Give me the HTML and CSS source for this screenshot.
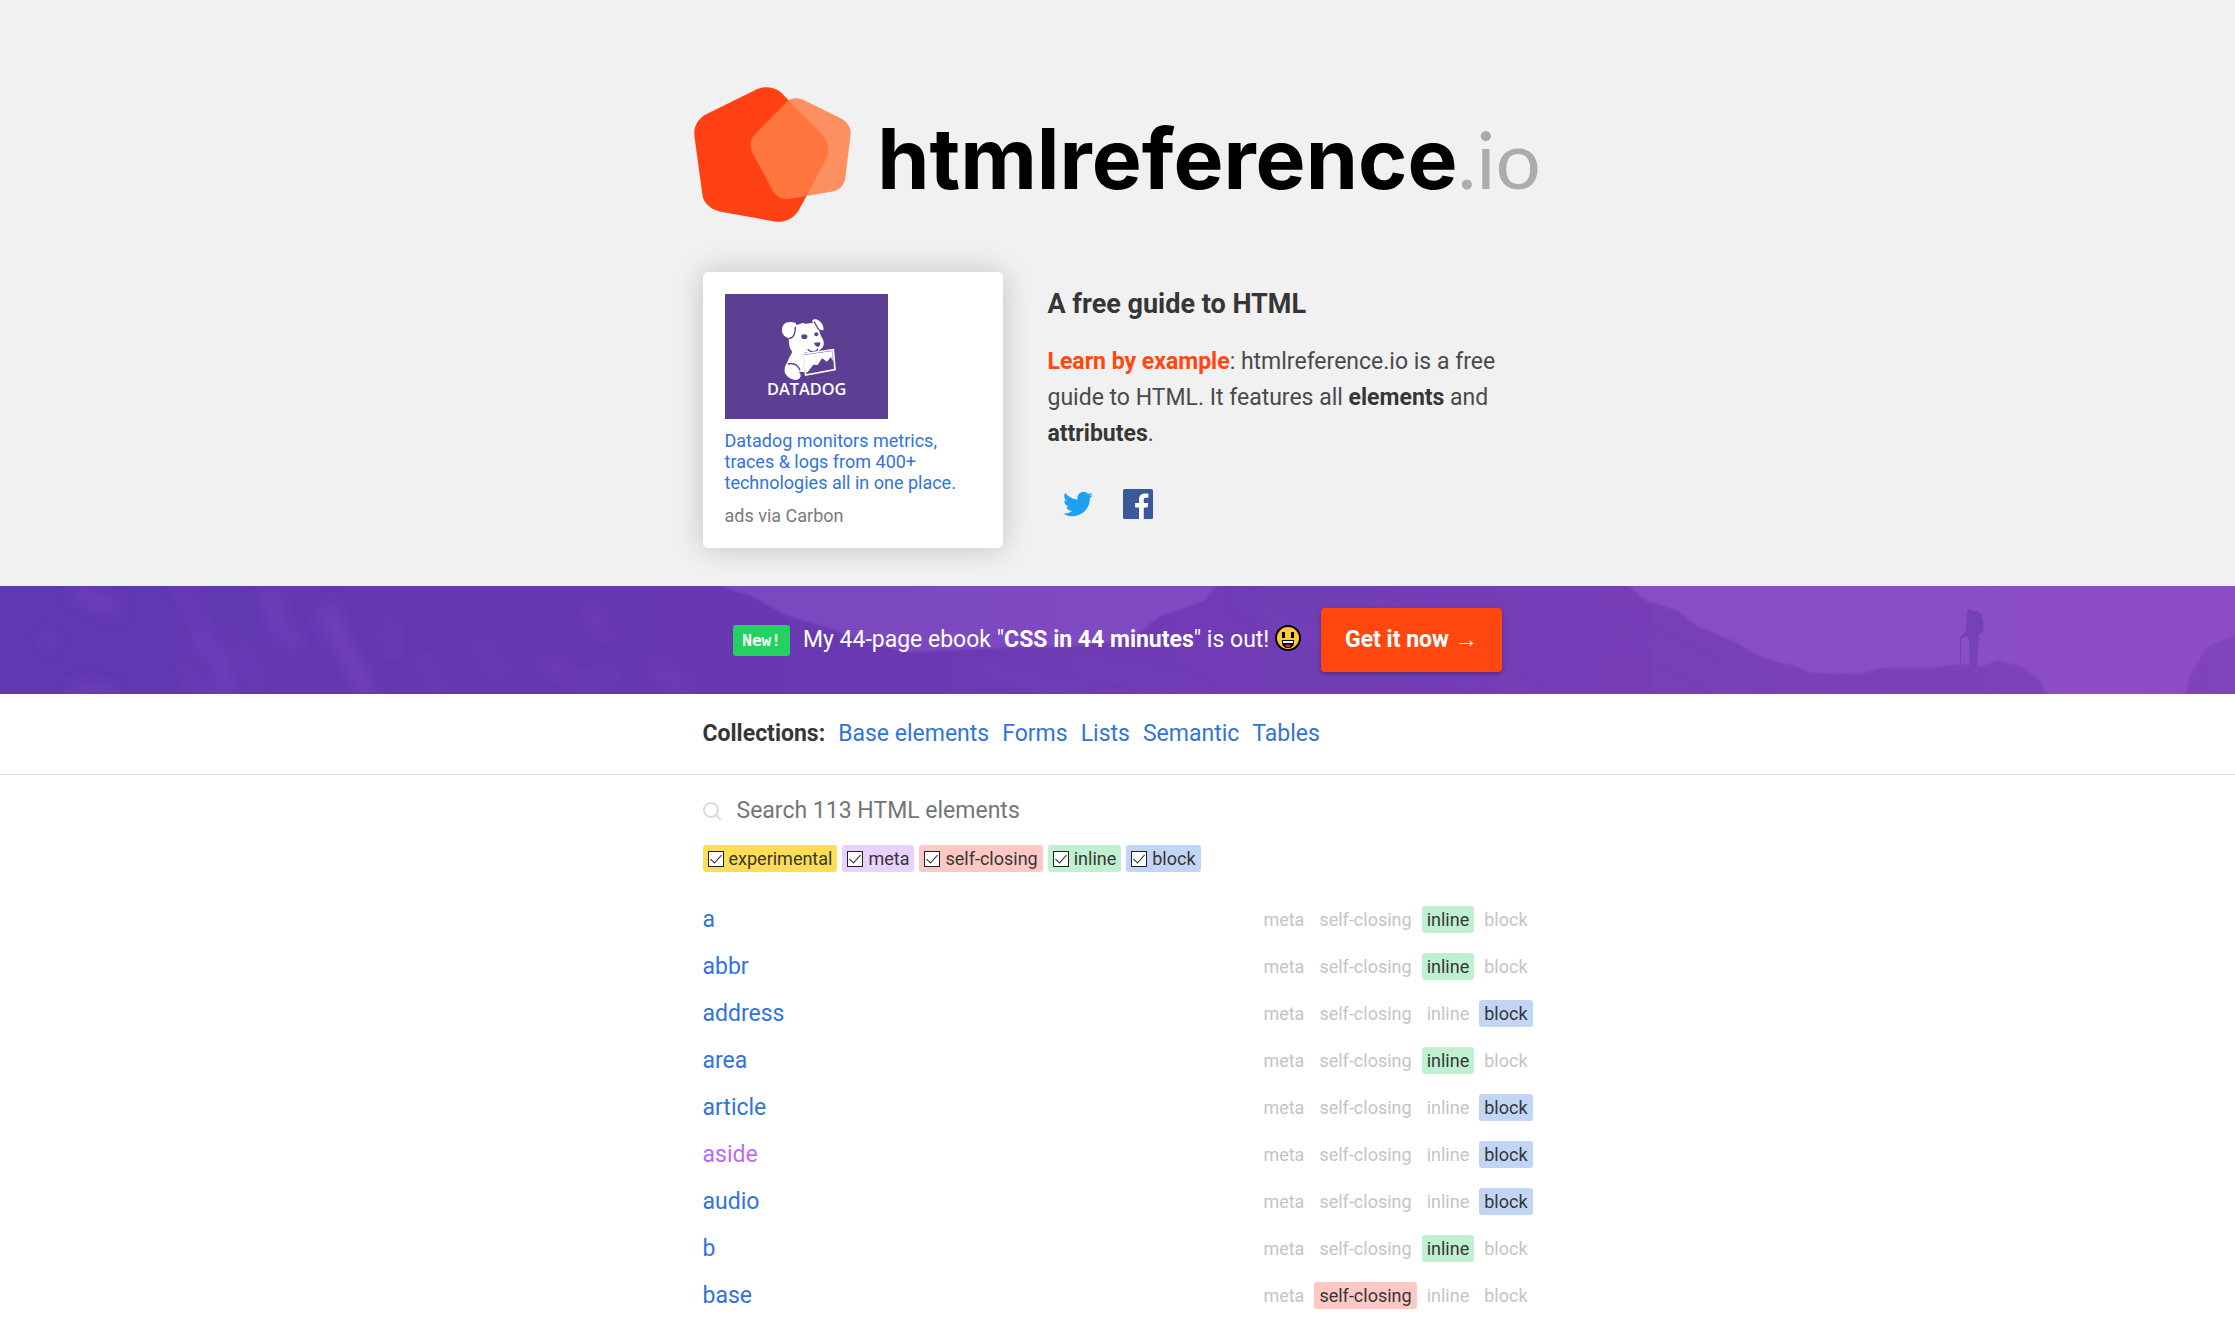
FILE: index.html
```html
<!DOCTYPE html>
<html lang="en">
<head>
<meta charset="utf-8">
<meta name="viewport" content="width=device-width, initial-scale=1">
<title>HTML Reference - A free guide to all HTML elements and attributes.</title>
<link rel="stylesheet" href="styles.css">
</head>
<body>
<header class="hero">
  <h1 class="logo">
    <svg class="logo-mark" viewBox="48 50 470 404" aria-hidden="true">
      <path fill="#ff4113" d="M236 57C265 44 298 51 318 76L432 193C452 216 454 242 443 268L362 418C346 444 320 456 294 453L124 423C95 415 76 396 73 372L49 195C47 170 58 148 80 134Z"/>
      <path fill="#ff7f46" opacity=".85" d="M328 92C342 81 362 82 376 89L490 145C508 155 518 172 517 190L501 322C497 345 484 358 462 363L328 386C306 387 292 374 285 362L222 246C213 227 216 206 228 194Z"/>
    </svg>
    <span class="logo-text">htmlreference<span class="logo-tld">.io</span></span>
  </h1>
  <div class="container intro">
    <aside class="ad">
      <a class="ad-link" href="#">
        <svg class="ad-image" viewBox="135 120 489 375" role="img" aria-label="Datadog">
          <path fill="#5c3f92" d="M135 120h489v375H135z"/>
          <path fill="#fff" d="M306 232C304 210 320 201 338 205C346 205 349 210 350 213L368 207C380 212 392 206 400 207C392 198 402 193 412 197C424 202 431 214 431 227C424 231 417 226 413 219C419 232 421 244 427 253C434 265 433 278 424 284C412 298 390 302 377 295L367 300L373 354L356 353C369 366 359 377 346 378C326 375 311 361 314 345C315 332 323 326 327 312L337 294C328 283 326 269 326 253C314 249 307 242 306 232Z"/>
          <path fill="none" stroke="#5c3f92" stroke-width="4" d="M326 253C340 253 346 243 346 218M402 203C408 210 410 219 416 227M323 330C342 325 354 335 360 349M383 286C395 298 410 294 414 284"/>
          <g fill="#5c3f92"><ellipse cx="373" cy="248" rx="9" ry="7"/><circle cx="409" cy="241" r="6"/><path d="M402 266L421 265Q422 273 415 279Q404 276 402 266Z"/></g>
          <path fill="#5c3f92" stroke="#fff" stroke-width="5" d="M368 300L460 287L465 347L377 363Z"/>
          <path fill="#fff" d="M371 303L458 291L458 321L453 309L441 323L426 313L413 333L400 332L383 354L376 357Z"/>
          <text class="ad-brand" x="380" y="424">DATADOG</text>
        </svg>
        <span class="ad-copy">Datadog monitors metrics, traces &amp; logs from 400+ technologies all in one place.</span>
      </a>
      <a class="ad-via" href="#">ads via Carbon</a>
    </aside>
    <div class="about">
      <h2 class="title">A free guide to HTML</h2>
      <p class="lead"><strong class="accent">Learn by example</strong>: htmlreference.io is a free guide to HTML. It features all <strong>elements</strong> and <strong>attributes</strong>.</p>
      <nav class="social" aria-label="Share">
        <a href="#" aria-label="Twitter"><svg viewBox="0 0 24 24"><path fill="#1da1f2" d="M24 4.6a10 10 0 0 1-2.8.8 5 5 0 0 0 2.1-2.7c-1 .6-2 1-3.1 1.2a4.9 4.9 0 0 0-8.4 4.5C7.7 8.200 4.100 6.300 1.700 3.200a4.900 4.900 0 0 0 1.500 6.600 4.900 4.900 0 0 1-2.200-.6v.06a4.900 4.900 0 0 0 3.900 4.800 5 5 0 0 1-2.200.1 4.900 4.900 0 0 0 4.600 3.400A9.900 9.900 0 0 1 0 19.500a14 14 0 0 0 7.500 2.200c9.100 0 14-7.500 14-14v-.6A10 10 0 0 0 24 4.600z"/></svg></a>
        <a href="#" aria-label="Facebook"><svg viewBox="0 0 24 24"><rect width="24" height="24" rx="1.300" fill="#3b5998"/><path fill="#fff" d="M12.800 24v-9.300H9.700v-3.600h3.100V8.400c0-3.100 1.900-4.800 4.700-4.800 1.300 0 2.500.1 2.800.15v3.200h-1.900c-1.500 0-1.800.7-1.800 1.800v2.350h3.600l-.5 3.600h-3.100V24z"/></svg></a>
      </nav>
    </div>
  </div>
</header>

<section class="promo">
  <svg class="promo-art" viewBox="0 0 2235 108" preserveAspectRatio="none" aria-hidden="true">
    <defs>
      <linearGradient id="sky" x1="700" x2="2235" y1="0" y2="0" gradientUnits="userSpaceOnUse"><stop stop-color="#7947bf"/><stop offset=".6" stop-color="#874dc5"/><stop offset="1" stop-color="#8e4dc6"/></linearGradient>
      <linearGradient id="rock" x1="0" x2="2235" y1="0" y2="0" gradientUnits="userSpaceOnUse"><stop stop-color="#6038b1"/><stop offset=".3" stop-color="#6738b1"/><stop offset=".65" stop-color="#733db6"/><stop offset="1" stop-color="#8144bb"/></linearGradient>
      <filter id="soft" x="-20%" y="-20%" width="140%" height="140%"><feGaussianBlur stdDeviation="7"/></filter>
      <filter id="edge"><feGaussianBlur stdDeviation="1"/></filter>
    </defs>
    <path fill="url(#sky)" d="M0 0h2235v108H0z"/>
    <path fill="url(#rock)" filter="url(#edge)" d="M-9-9H715L725 2 752 10 770 20 782 28 828 42 860 54 893 63 910 66 1000 62 1080 60 1128 54 1145 42 1160 30 1185 22 1205 14 1225-9H1618L1645 14 1678 25 1697 40 1735 56 1750 65 1772 75 1795 80 1812 87 1860 88 1880 82 1930 82 1958 78 1982 80 1998 74 2022 81 2040 94 2053 120H-9zM2182 120L2190 90 2203 66 2212 58 2250 44V120z"/>
    <path fill="#7541b8" d="M1967 25q3-4 6 0 8-2 10 8 2 10-1 14h-3l-2 34h-7l-1-28-3-3-5 3v27h-1V51l6-6z"/>
    <g fill="none" stroke="#7c47c2" stroke-linecap="round" filter="url(#soft)">
      <path stroke-width="18" opacity=".4" d="M80 8L115 22M270 10L280 42 292 55M325 30L350 75 370 112M225 108L220 70 200 55M75 105L110 108"/>
      <path stroke-width="9" opacity=".4" d="M180 0L205 48M332 15L345 60 365 95M47 45L50 60M185 80L200 108M390 38L392 65M545 78L568 88M655 82L685 102M425 76L440 104M592 25L604 48M245 62L255 98"/>
      <path stroke-width="12" opacity=".22" d="M480 60L500 85M610 90L580 98M980 82L1080 105M1080 76L1200 105M1240 15L1360 70M1380 20L1470 94M1500 98L1530 110M1620 40L1740 105"/>
    </g>
  </svg>
  <div class="promo-content">
    <span class="new">New!</span>
    <p class="promo-text">My 44-page ebook "<strong>CSS in 44 minutes</strong>" is out!
      <svg class="smile" viewBox="0 0 26 26" role="img" aria-label="grinning face"><circle cx="13" cy="13" r="12" fill="#ffc83d" stroke="#000" stroke-width="2"/><path d="M7 7h3v6H7zM16 7h3v6h-3z"/><path d="M7 15h12v2q0 6-6 6t-6-6z"/><path fill="#fff" d="M8 16h10v2H8z"/><path fill="#f03a17" d="M10 20.500q3-2 6 0-3 3-6 0"/></svg>
    </p>
    <button class="cta" type="button">Get it now →</button>
  </div>
</section>

<nav class="collections" aria-label="Collections">
  <div class="container collections-list">
    <strong>Collections:</strong>
    <a href="#">Base elements</a>
    <a href="#">Forms</a>
    <a href="#">Lists</a>
    <a href="#">Semantic</a>
    <a href="#">Tables</a>
  </div>
</nav>

<main class="container">
  <div class="search">
    <label for="search" aria-label="Search"><svg class="search-icon" viewBox="0 0 19 19"><circle cx="8" cy="8" r="7"/><path d="M13 13l5 5"/></svg></label>
    <input id="search" class="search-input" type="text" placeholder="Search 113 HTML elements">
  </div>
  <div class="filters">
    <label class="filter experimental"><input type="checkbox" checked>experimental</label>
    <label class="filter meta"><input type="checkbox" checked>meta</label>
    <label class="filter self-closing"><input type="checkbox" checked>self-closing</label>
    <label class="filter inline"><input type="checkbox" checked>inline</label>
    <label class="filter block"><input type="checkbox" checked>block</label>
  </div>
  <ul class="elements">
    <li><a href="#">a</a><span class="tags"><span>meta</span><span>self-closing</span><span class="inline">inline</span><span>block</span></span></li>
    <li><a href="#">abbr</a><span class="tags"><span>meta</span><span>self-closing</span><span class="inline">inline</span><span>block</span></span></li>
    <li><a href="#">address</a><span class="tags"><span>meta</span><span>self-closing</span><span>inline</span><span class="block">block</span></span></li>
    <li><a href="#">area</a><span class="tags"><span>meta</span><span>self-closing</span><span class="inline">inline</span><span>block</span></span></li>
    <li><a href="#">article</a><span class="tags"><span>meta</span><span>self-closing</span><span>inline</span><span class="block">block</span></span></li>
    <li><a class="seen" href="#">aside</a><span class="tags"><span>meta</span><span>self-closing</span><span>inline</span><span class="block">block</span></span></li>
    <li><a href="#">audio</a><span class="tags"><span>meta</span><span>self-closing</span><span>inline</span><span class="block">block</span></span></li>
    <li><a href="#">b</a><span class="tags"><span>meta</span><span>self-closing</span><span class="inline">inline</span><span>block</span></span></li>
    <li><a href="#">base</a><span class="tags"><span>meta</span><span class="self-closing">self-closing</span><span>inline</span><span>block</span></span></li>
  </ul>
</main>
</body>
</html>
```
FILE: styles.css
```css
* {
  box-sizing: border-box;
  margin: 0;
  padding: 0;
}

body {
  background: #fff;
  color: #4a4a4a;
  font-family: Roboto, "Liberation Sans", sans-serif;
  font-size: 23px;
  line-height: 36px;
}

a {
  color: #3273dc;
  text-decoration: none;
}

strong {
  color: #363636;
  font-weight: 700;
}

svg {
  display: block;
}

.container {
  width: 100%;
  max-width: 830px;
  margin: 0 auto;
}

/* Hero */
.hero {
  background: #f1f1f1;
  padding: 87px 0 38px;
}

.logo {
  display: flex;
  justify-content: center;
  gap: 26px;
  margin-bottom: 42px;
}

.logo-mark {
  width: 157px;
  height: 135px;
}

.logo-text {
  color: #000;
  font-family: Inter, sans-serif;
  font-size: 84px;
  font-weight: 700;
  line-height: 142px;
}

.logo-tld {
  color: #acacac;
  font-family: Lato, sans-serif;
  font-size: 80px;
  font-weight: 400;
}

.intro {
  display: flex;
  align-items: flex-start;
  gap: 45px;
}

.ad {
  flex: 0 0 300px;
  padding: 22px;
  border-radius: 5px;
  background: #fff;
  box-shadow: 0 0 30px rgba(0, 0, 0, 0.2);
  font-size: 18px;
  line-height: 21px;
}

.ad-image {
  width: 163px;
  height: 125px;
  margin-bottom: 11px;
}

.ad-brand {
  fill: #fff;
  font: 600 49px "Open Sans", sans-serif;
  text-anchor: middle;
}

.ad-copy {
  display: block;
  margin-bottom: 12px;
}

.ad-via {
  display: block;
  color: #7a7a7a;
}

.about {
  flex: 1;
  padding-top: 14px;
}

.title {
  margin-bottom: 22px;
  color: #363636;
  font-size: 27px;
  font-weight: 700;
  line-height: 36px;
}

.lead {
  margin-bottom: 37px;
}

.accent {
  color: #ff470f;
}

.social {
  display: flex;
  gap: 30px;
  padding-left: 15px;
}

.social svg {
  width: 30px;
  height: 30px;
}

/* Ebook banner */
.promo {
  position: relative;
  padding: 22px 0;
  background: #7440b8;
}

.promo-art {
  position: absolute;
  inset: 0;
  width: 100%;
  height: 100%;
}

.promo-content {
  position: relative;
  display: flex;
  align-items: center;
  justify-content: center;
}

.new {
  margin-right: 13px;
  padding: 0 9px;
  border-radius: 3px;
  background: #23d160;
  color: #fff;
  font: 700 16px/31px "DejaVu Sans Mono", monospace;
}

.promo-text {
  margin-right: 20px;
  color: #fff;
}

.promo-text strong {
  color: #fff;
}

.smile {
  display: inline-block;
  width: 26px;
  height: 26px;
  vertical-align: -4px;
}

.cta {
  height: 64px;
  padding: 0 24px;
  border: 0;
  border-radius: 4px;
  background: #ff470f;
  box-shadow: 0 2px 4px rgba(0, 0, 0, 0.3);
  color: #fff;
  font: 700 23px/36px Roboto, "Liberation Sans", sans-serif;
}

/* Collections */
.collections {
  padding: 22px 0;
  border-bottom: 1px solid #dbdbdb;
}

.collections-list {
  display: flex;
  gap: 13px;
}

/* Search */
.search {
  display: flex;
  align-items: center;
  gap: 15px;
  padding-top: 18px;
}

.search-icon {
  width: 19px;
  height: 19px;
  fill: none;
  stroke: #dbdbdb;
  stroke-width: 2;
}

.search-input {
  flex: 1;
  border: 0;
  outline: 0;
  background: none;
  color: #363636;
  font: inherit;
}

.search-input::placeholder {
  color: #757575;
  opacity: 1;
}

.filters {
  display: flex;
  gap: 5px;
  margin: 16px 0 24px;
}

.filter,
.tags span {
  padding: 0 5px;
  border-radius: 3px;
  font-size: 18px;
  line-height: 27px;
}

.filter {
  display: flex;
  align-items: center;
  gap: 5px;
}

.filter input {
  appearance: none;
  display: grid;
  place-items: center;
  width: 16px;
  height: 16px;
  border: 1px solid #222;
  background: #fff;
}

.filter input:checked::after {
  content: "";
  width: 5px;
  height: 10px;
  border: solid #222;
  border-width: 0 1px 1px 0;
  transform: translateY(-1px) rotate(42deg);
}

.experimental {
  background: #ffdd57;
  color: #363636;
}

.meta {
  background: #e9d2ff;
  color: #363636;
}

.tags .self-closing,
.self-closing {
  background: #ffc8c4;
  color: #363636;
}

.tags .inline,
.inline {
  background: #bff1d0;
  color: #363636;
}

.tags .block,
.block {
  background: #c2d5f5;
  color: #363636;
}

/* Element list */
.elements {
  list-style: none;
}

.elements li {
  display: flex;
  align-items: center;
  justify-content: space-between;
  height: 47px;
}

.elements .seen {
  color: #b86bff;
}

.tags {
  display: flex;
  gap: 5px;
  color: #c4c4c4;
}
```
